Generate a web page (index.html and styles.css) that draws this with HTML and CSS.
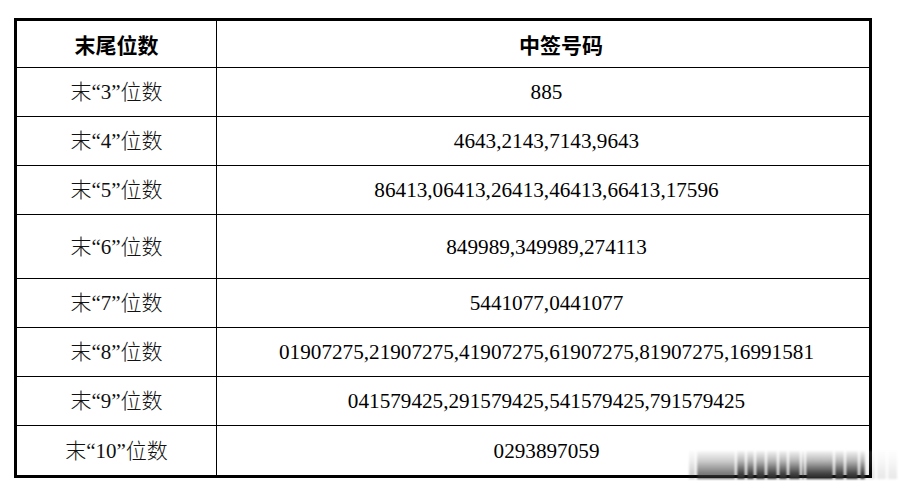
FILE: index.html
```html
<!DOCTYPE html>
<html lang="zh-CN">
<head>
<meta charset="utf-8">
<link rel="stylesheet" href="styles.css">
</head>
<body>
<table class="lottery">
  <tr class="head">
    <th class="c1">末尾位数</th>
    <th class="c2">中签号码</th>
  </tr>
  <tr><td class="c1">末“3”位数</td><td class="c2">885</td></tr>
  <tr><td class="c1">末“4”位数</td><td class="c2">4643,2143,7143,9643</td></tr>
  <tr><td class="c1">末“5”位数</td><td class="c2">86413,06413,26413,46413,66413,17596</td></tr>
  <tr class="tall"><td class="c1">末“6”位数</td><td class="c2">849989,349989,274113</td></tr>
  <tr><td class="c1">末“7”位数</td><td class="c2">5441077,0441077</td></tr>
  <tr><td class="c1">末“8”位数</td><td class="c2">01907275,21907275,41907275,61907275,81907275,16991581</td></tr>
  <tr><td class="c1">末“9”位数</td><td class="c2">041579425,291579425,541579425,791579425</td></tr>
  <tr class="last"><td class="c1">末“10”位数</td><td class="c2">0293897059</td></tr>
</table>
<div class="watermark">
  <span class="s" style="width:6px;opacity:.25"></span>
  <span class="s" style="width:38px;opacity:.7"></span>
  <span class="s" style="width:8px"></span>
  <span class="s" style="width:7px"></span>
  <span class="s" style="width:9px"></span>
  <span class="s" style="width:10px"></span>
  <span class="s" style="width:8px"></span>
  <span class="s" style="width:11px"></span>
  <span class="s" style="width:2px"></span>
  <span class="s" style="width:27px"></span>
  <span class="s" style="width:9px"></span>
  <span class="s" style="width:12px"></span>
  <span class="s" style="width:5px"></span>
  <span class="s" style="width:8px;opacity:.12"></span>
  <span class="s" style="width:9px;opacity:.1"></span>
  <span class="s" style="width:9px;opacity:.1"></span>
</div>
</body>
</html>
```
FILE: styles.css
```css
html, body {
  margin: 0;
  padding: 0;
  background: #ffffff;
}
body {
  padding: 18px 0 0 14px;
  position: relative;
  width: 919px;
  height: 490px;
  box-sizing: border-box;
  overflow: hidden;
  font-family: "Liberation Serif", "Noto Sans CJK SC", serif;
  color: #000;
}
.lottery {
  border-collapse: collapse;
  width: 858px;
  border: 3px solid #000;
  table-layout: fixed;
}
.lottery th, .lottery td {
  border: 1px solid #000;
  padding: 0;
  text-align: center;
  vertical-align: middle;
  font-size: 21px;
  line-height: 24px;
}
.lottery th {
  font-family: "Noto Sans CJK SC", sans-serif;
  font-weight: 700;
}
.lottery td.c1 {
  font-weight: 300;
  color: #111;
}
.lottery td.c2 {
  padding-left: 7px;
  font-size: 21.2px;
}
.lottery .c1 { width: 199px; }
.lottery tr { height: 49px; }
.lottery tr.head { height: 48px; }
.lottery tr.tall { height: 64px; }
.lottery tr.last { height: 51px; }
.lottery th.c2 { padding-left: 36px; }

.watermark {
  position: absolute;
  left: 689px;
  top: 451px;
  height: 28px;
  display: flex;
  gap: 2px;
  filter: blur(1.2px);
}
.watermark .s {
  display: block;
  height: 28px;
  background: linear-gradient(#f4f4f4 0%, #b8b8b8 35%, #444 80%, #222 100%);
}
```
